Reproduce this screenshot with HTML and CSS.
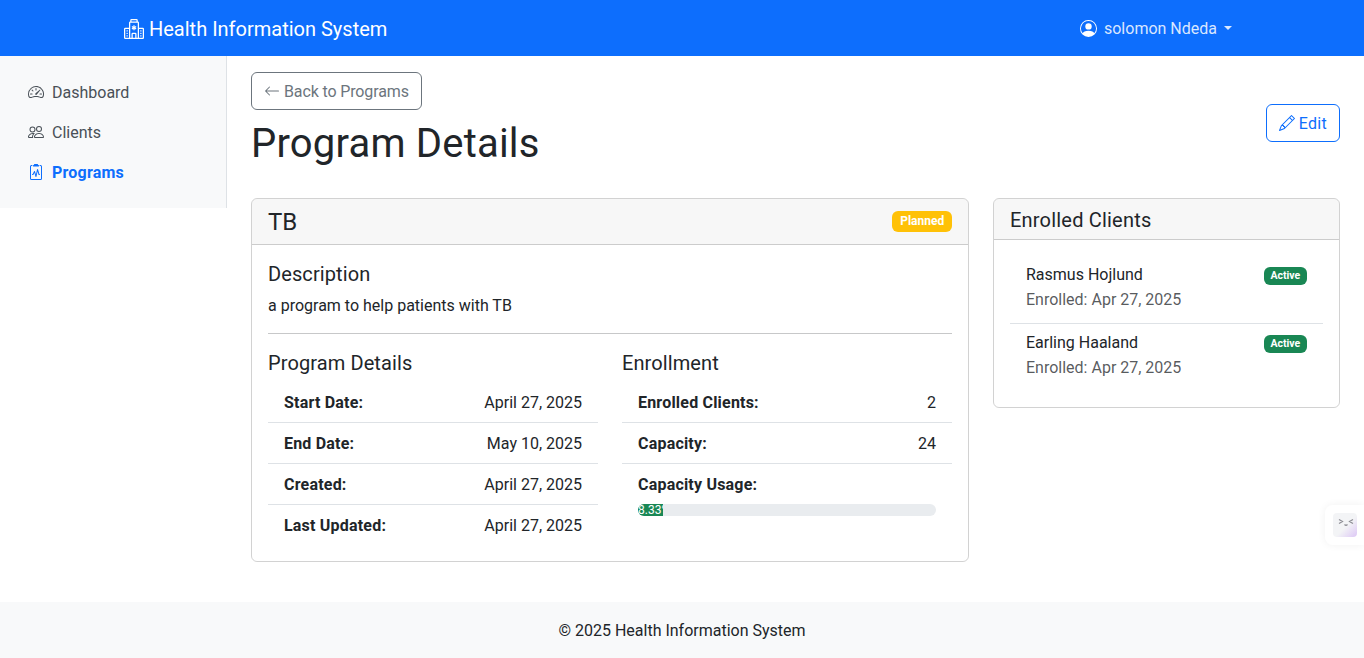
FILE: index.html
```html
<!DOCTYPE html>
<html lang="en">
<head>
    <meta charset="utf-8">
    <title>Program Details - Health Information System</title>
    <link rel="stylesheet" href="styles.css">
</head>
<body>

<nav class="topbar">
    <a class="brand" href="#">
        <svg class="icon brand-icon" viewBox="0 0 16 16" fill="currentColor"><path d="M8.5 5.034v1.1l.953-.55.5.867L9 7l.953.55-.5.866-.953-.55v1.1h-1v-1.1l-.953.55-.5-.866L7 7l-.953-.55.5-.866.953.55v-1.1zM13.25 9a.25.25 0 0 0-.25.25v.5c0 .138.112.25.25.25h.5a.25.25 0 0 0 .25-.25v-.5a.25.25 0 0 0-.25-.25zM13 11.25a.25.25 0 0 1 .25-.25h.5a.25.25 0 0 1 .25.25v.5a.25.25 0 0 1-.25.25h-.5a.25.25 0 0 1-.25-.25zm.25 1.75a.25.25 0 0 0-.25.25v.5c0 .138.112.25.25.25h.5a.25.25 0 0 0 .25-.25v-.5a.25.25 0 0 0-.25-.25zm-11-4a.25.25 0 0 0-.25.25v.5c0 .138.112.25.25.25h.5A.25.25 0 0 0 3 9.75v-.5A.25.25 0 0 0 2.75 9zm0 2a.25.25 0 0 0-.25.25v.5c0 .138.112.25.25.25h.5a.25.25 0 0 0 .25-.25v-.5a.25.25 0 0 0-.25-.25zM2 13.25a.25.25 0 0 1 .25-.25h.5a.25.25 0 0 1 .25.25v.5a.25.25 0 0 1-.25.25h-.5a.25.25 0 0 1-.25-.25z"/><path d="M5 1a1 1 0 0 1 1-1h4a1 1 0 0 1 1 1v1a1 1 0 0 1 1 1v4h3a1 1 0 0 1 1 1v7a1 1 0 0 1-1 1H1a1 1 0 0 1-1-1V8a1 1 0 0 1 1-1h3V3a1 1 0 0 1 1-1zm2 14h2v-3H7zm3 0h1V3H5v12h1v-3a1 1 0 0 1 1-1h2a1 1 0 0 1 1 1zm0-14H6v1h4zm2 7v7h3V8zm-8 7V8H1v7z"/></svg>
        Health Information System
    </a>
    <a class="user-menu" href="#">
        <svg class="icon user-icon" viewBox="0 0 16 16" fill="currentColor"><path d="M11 6a3 3 0 1 1-6 0 3 3 0 0 1 6 0"/><path fill-rule="evenodd" d="M0 8a8 8 0 1 1 16 0A8 8 0 0 1 0 8m8-7a7 7 0 0 0-5.468 11.37C3.242 11.226 4.805 10 8 10s4.757 1.225 5.468 2.37A7 7 0 0 0 8 1"/></svg>
        <span class="user-name">solomon Ndeda</span>
        <span class="caret"></span>
    </a>
</nav>

<div class="layout">
    <aside class="sidebar">
        <a class="side-link" href="#">
            <svg class="icon" viewBox="0 0 16 16" fill="currentColor"><path d="M8 4a.5.5 0 0 1 .5.5V6a.5.5 0 0 1-1 0V4.5A.5.5 0 0 1 8 4M3.732 5.732a.5.5 0 0 1 .707 0l.915.914a.5.5 0 1 1-.708.708l-.914-.915a.5.5 0 0 1 0-.707M2 10a.5.5 0 0 1 .5-.5h1.586a.5.5 0 0 1 0 1H2.5A.5.5 0 0 1 2 10m9.5 0a.5.5 0 0 1 .5-.5h1.5a.5.5 0 0 1 0 1H12a.5.5 0 0 1-.5-.5m.754-4.246a.39.39 0 0 0-.527-.02L7.547 9.31a.91.91 0 1 0 1.302 1.258l3.434-4.297a.39.39 0 0 0-.029-.518z"/><path fill-rule="evenodd" d="M0 10a8 8 0 1 1 15.547 2.661c-.442 1.253-1.845 1.602-2.932 1.25C11.309 13.488 9.475 13 8 13c-1.474 0-3.31.488-4.615.911-1.087.352-2.49.003-2.932-1.25A8 8 0 0 1 0 10m8-7a7 7 0 0 0-6.603 9.329c.203.575.923.876 1.68.63C4.397 12.533 6.358 12 8 12s3.604.532 4.923.96c.757.245 1.477-.056 1.68-.631A7 7 0 0 0 8 3"/></svg>
            Dashboard
        </a>
        <a class="side-link" href="#">
            <svg class="icon" viewBox="0 0 16 16" fill="currentColor"><path d="M15 14s1 0 1-1-1-4-5-4-5 3-5 4 1 1 1 1zm-7.978-1L7 12.996c.001-.264.167-1.03.76-1.72C8.312 10.629 9.282 10 11 10c1.717 0 2.687.63 3.24 1.276.593.69.758 1.457.76 1.72l-.008.002-.014.002zM11 7a2 2 0 1 0 0-4 2 2 0 0 0 0 4m3-2a3 3 0 1 1-6 0 3 3 0 0 1 6 0M6.936 9.28a6 6 0 0 0-1.23-.247A7 7 0 0 0 5 9c-4 0-5 3-5 4q0 1 1 1h4.216A2.24 2.24 0 0 1 5 13c0-1.01.377-2.042 1.09-2.904.243-.294.526-.569.846-.816M4.92 10A5.5 5.5 0 0 0 4 13H1c0-.26.164-1.03.76-1.724.545-.636 1.492-1.256 3.16-1.275ZM1.5 5.5a3 3 0 1 1 6 0 3 3 0 0 1-6 0m3-2a2 2 0 1 0 0 4 2 2 0 0 0 0-4"/></svg>
            Clients
        </a>
        <a class="side-link active" href="#">
            <svg class="icon" viewBox="0 0 16 16" fill="currentColor"><path d="M9.5 0a.5.5 0 0 1 .5.5.5.5 0 0 0 .5.5.5.5 0 0 1 .5.5V2a.5.5 0 0 1-.5.5h-5A.5.5 0 0 1 5 2v-.5a.5.5 0 0 1 .5-.5.5.5 0 0 0 .5-.5.5.5 0 0 1 .5-.5z"/><path d="M3 2.5a.5.5 0 0 1 .5-.5H4a.5.5 0 0 0 0-1h-.5A1.5 1.5 0 0 0 2 2.5v12A1.5 1.5 0 0 0 3.5 16h9a1.5 1.5 0 0 0 1.5-1.5v-12A1.5 1.5 0 0 0 12.5 1H12a.5.5 0 0 0 0 1h.5a.5.5 0 0 1 .5.5v12a.5.5 0 0 1-.5.5h-9a.5.5 0 0 1-.5-.5z"/><path d="M9.979 5.356a.5.5 0 0 0-.968.04L7.92 10.49l-.94-3.135a.5.5 0 0 0-.926-.08L4.69 10H4.5a.5.5 0 0 0 0 1H5a.5.5 0 0 0 .447-.276l.936-1.873 1.138 3.793a.5.5 0 0 0 .968-.04L9.58 7.51l.94 3.135A.5.5 0 0 0 11 11h.5a.5.5 0 0 0 0-1h-.128z"/></svg>
            Programs
        </a>
    </aside>

    <main class="content">
        <div class="page-head">
            <div>
                <a class="btn btn-grey" href="#">
                    <svg class="icon" viewBox="0 0 16 16" fill="currentColor"><path fill-rule="evenodd" d="M15 8a.5.5 0 0 0-.5-.5H2.707l3.147-3.146a.5.5 0 1 0-.708-.708l-4 4a.5.5 0 0 0 0 .708l4 4a.5.5 0 0 0 .708-.708L2.707 8.5H14.5A.5.5 0 0 0 15 8"/></svg>
                    Back to Programs
                </a>
                <h1>Program Details</h1>
            </div>
            <a class="btn btn-blue" href="#">
                <svg class="icon" viewBox="0 0 16 16" fill="currentColor"><path d="M12.146.146a.5.5 0 0 1 .708 0l3 3a.5.5 0 0 1 0 .708l-10 10a.5.5 0 0 1-.168.11l-5 2a.5.5 0 0 1-.65-.65l2-5a.5.5 0 0 1 .11-.168zM11.207 2.5 13.5 4.793 14.793 3.5 12.5 1.207zm1.586 3L10.5 3.207 4 9.707V10h.5a.5.5 0 0 1 .5.5v.5h.5a.5.5 0 0 1 .5.5v.5h.293zm-9.761 5.175-.106.106-1.528 3.821 3.821-1.528.106-.106A.5.5 0 0 1 5 12.5V12h-.5a.5.5 0 0 1-.5-.5V11h-.5a.5.5 0 0 1-.468-.325"/></svg>
                Edit
            </a>
        </div>

        <div class="columns">
            <section class="card">
                <div class="card-head card-head-split">
                    <h3>TB</h3>
                    <span class="badge badge-yellow">Planned</span>
                </div>
                <div class="card-body">
                    <h5>Description</h5>
                    <p class="description">a program to help patients with TB</p>
                    <hr>
                    <div class="details">
                        <div>
                            <h5>Program Details</h5>
                            <ul class="rows">
                                <li><strong>Start Date:</strong><span>April 27, 2025</span></li>
                                <li><strong>End Date:</strong><span>May 10, 2025</span></li>
                                <li><strong>Created:</strong><span>April 27, 2025</span></li>
                                <li><strong>Last Updated:</strong><span>April 27, 2025</span></li>
                            </ul>
                        </div>
                        <div>
                            <h5>Enrollment</h5>
                            <ul class="rows">
                                <li><strong>Enrolled Clients:</strong><span>2</span></li>
                                <li><strong>Capacity:</strong><span>24</span></li>
                                <li class="usage">
                                    <strong>Capacity Usage:</strong>
                                    <div class="progress">
                                        <div class="progress-bar" style="width: 8.33%">8.33%</div>
                                    </div>
                                </li>
                            </ul>
                        </div>
                    </div>
                </div>
            </section>

            <section class="card">
                <div class="card-head">
                    <h5 class="card-title">Enrolled Clients</h5>
                </div>
                <div class="card-body">
                    <div class="client">
                        <div>
                            <h6>Rasmus Hojlund</h6>
                            <p>Enrolled: Apr 27, 2025</p>
                        </div>
                        <span class="badge badge-green">Active</span>
                    </div>
                    <div class="client">
                        <div>
                            <h6>Earling Haaland</h6>
                            <p>Enrolled: Apr 27, 2025</p>
                        </div>
                        <span class="badge badge-green">Active</span>
                    </div>
                </div>
            </section>
        </div>
    </main>
</div>

<footer class="footer">© 2025 Health Information System</footer>

<div class="helper">
    <div class="helper-face">
        <svg viewBox="0 0 24 24" fill="none" stroke="#8d8d94" stroke-width="1.2"><path d="M6 6.5 9.5 8.5 6 10.5M20 6.5 16.5 8.5 20 10.5M11.5 11.5q1.5 1.5 3 0"/></svg>
    </div>
</div>

</body>
</html>
```

FILE: styles.css
```css
html {
    font-family: Roboto, "Noto Sans", sans-serif;
    font-size: 16px;
    line-height: 1.5;
    color: #212529;
}

body {
    margin: 0;
    min-height: 100vh;
    display: flex;
    flex-direction: column;
}

a {
    text-decoration: none;
}

h1, h3, h5, h6, p, ul {
    margin: 0;
    padding: 0;
    font-weight: 400;
    line-height: 1.2;
}

.icon {
    width: 16px;
    height: 16px;
    flex-shrink: 0;
}

/* top bar */
.topbar {
    height: 56px;
    padding: 0 132px 0 124px;
    background-color: #0d6efd;
    display: flex;
    align-items: center;
    justify-content: space-between;
}

.brand {
    padding-top: 2px;
    color: white;
    font-size: 20px;
    display: flex;
    align-items: center;
    gap: 5px;
}

.brand-icon {
    width: 20px;
    height: 20px;
}

.user-menu {
    color: rgba(255, 255, 255, 0.85);
    display: flex;
    align-items: center;
    gap: 7px;
}

.user-name {
    padding-top: 2px;
}

.user-icon {
    width: 17px;
    height: 17px;
    color: white;
}

.caret {
    border-top: 4.8px solid;
    border-left: 4.8px solid transparent;
    border-right: 4.8px solid transparent;
}

/* sidebar and page */
.layout {
    display: flex;
    align-items: flex-start;
    flex: 1;
}

.sidebar {
    width: 227px;
    box-sizing: border-box;
    flex-shrink: 0;
    padding: 16px 12px;
    background-color: #f8f9fa;
    border-right: 1px solid #dee2e6;
}

.side-link {
    padding: 9px 16px 7px;
    color: #495057;
    display: flex;
    align-items: center;
    gap: 8px;
}

.side-link .icon,
.btn .icon {
    margin-top: -2px;
}

.side-link.active {
    color: #0d6efd;
    font-weight: 700;
    letter-spacing: 0.2px;
}

.content {
    flex: 1;
    min-width: 0;
    padding: 16px 24px 40px;
}

.page-head {
    display: flex;
    align-items: center;
    justify-content: space-between;
    margin-bottom: 24px;
}

.page-head h1 {
    font-size: 40px;
    margin: 10px 0 6px;
    letter-spacing: 0.2px;
}

.btn {
    box-sizing: border-box;
    height: 38px;
    padding: 7px 12px 5px;
    border: 1px solid;
    border-radius: 6px;
    display: inline-flex;
    align-items: center;
    gap: 4px;
}

.btn-grey {
    color: #6c757d;
    border-color: #6c757d;
    letter-spacing: -0.13px;
}

.btn-blue {
    color: #0d6efd;
    border-color: #0d6efd;
    letter-spacing: 0.3px;
}

.columns {
    display: grid;
    grid-template-columns: 718px 347px;
    gap: 24px;
    align-items: start;
}

/* cards */
.card {
    border: 1px solid rgba(0, 0, 0, 0.175);
    border-radius: 6px;
}

.card-head {
    padding: 8px 16px;
    background-color: rgba(0, 0, 0, 0.03);
    border-bottom: 1px solid rgba(0, 0, 0, 0.175);
    border-radius: 5px 5px 0 0;
}

.card-head-split {
    display: flex;
    align-items: center;
    justify-content: space-between;
}

.card-head h3 {
    font-size: 24px;
    padding-top: 1px;
    margin-bottom: -1px;
}

.card-body {
    padding: 16px;
}

h5 {
    font-size: 20px;
    padding-top: 1px;
    margin-bottom: 7px;
    letter-spacing: 0.1px;
}

.card-head .card-title {
    margin-bottom: -1px;
    letter-spacing: 0.2px;
}

.description {
    line-height: 1.5;
    padding-top: 1px;
    margin-bottom: -1px;
}

hr {
    margin: 16px 0;
    border: none;
    border-top: 1px solid rgba(33, 37, 41, 0.25);
}

.details {
    display: grid;
    grid-template-columns: 1fr 1fr;
    gap: 24px;
}

.rows {
    list-style: none;
    line-height: 1.5;
}

.rows li {
    padding: 9px 16px 7px;
    display: flex;
    justify-content: space-between;
    border-bottom: 1px solid #dee2e6;
}

.rows li:last-child {
    border-bottom: none;
}

.rows li.usage {
    display: block;
}

.rows strong {
    font-weight: 700;
    letter-spacing: 0.2px;
}

.progress {
    height: 12px;
    margin-top: 7px;
    background-color: #e9ecef;
    border-radius: 6px;
    overflow: hidden;
    font-size: 12px;
}

.progress-bar {
    height: 100%;
    background-color: #198754;
    color: white;
    line-height: 12px;
    text-align: center;
    white-space: nowrap;
    overflow: hidden;
}

/* badges */
.badge {
    padding: 0.35em 0.65em;
    border-radius: 6px;
    font-size: 12px;
    font-weight: 700;
    line-height: 1;
    color: white;
}

.badge-yellow {
    background-color: #ffc107;
}

.badge-green {
    background-color: #198754;
    font-size: 10.5px;
    margin-top: 3px;
}

/* enrolled clients */
.client {
    padding: 8px 16px;
    display: flex;
    align-items: flex-start;
    justify-content: space-between;
    border-bottom: 1px solid #dee2e6;
}

.client:last-child {
    border-bottom: none;
}

.client h6 {
    font-size: 16px;
    padding-top: 1px;
    margin-bottom: 3px;
}

.client p {
    line-height: 1.5;
    padding-top: 1px;
    margin-bottom: 3px;
    color: rgba(33, 37, 41, 0.75);
}

.footer {
    padding: 17px 16px 15px;
    background-color: #f8f9fa;
    text-align: center;
}

/* floating helper tab on the right edge */
.helper {
    position: fixed;
    right: 0;
    top: 505px;
    width: 31px;
    height: 40px;
    padding-left: 8px;
    background-color: white;
    border-radius: 8px 0 0 8px;
    box-shadow: 0 0 8px rgba(0, 0, 0, 0.06);
    display: flex;
    align-items: center;
}

.helper-face {
    width: 24px;
    height: 24px;
    border-radius: 4px;
    background: linear-gradient(135deg, #f3f4f6 55%, #dcc6f5);
}

.helper-face svg {
    display: block;
}
```
